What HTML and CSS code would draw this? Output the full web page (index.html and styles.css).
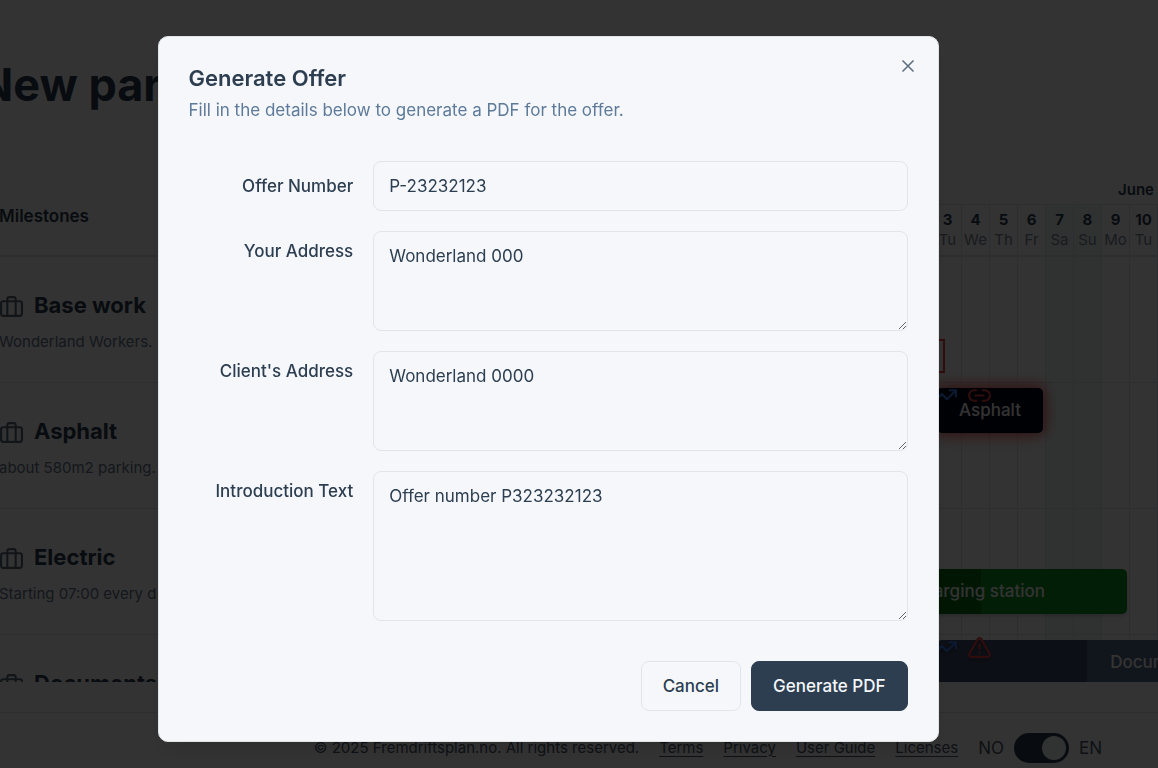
FILE: index.html
```html
<!DOCTYPE html>
<html lang="en">
<head>
    <meta charset="utf-8">
    <meta name="viewport" content="width=device-width, initial-scale=1">
    <title>Generate Offer</title>
    <link rel="stylesheet" href="styles.css">
</head>
<body>

<svg class="sprite" aria-hidden="true">
    <symbol id="briefcase" viewBox="0 0 24 24">
        <path d="M16 20V4a2 2 0 0 0-2-2h-4a2 2 0 0 0-2 2v16"/>
        <rect x="2" y="6" width="20" height="14" rx="2"/>
    </symbol>
    <symbol id="trend" viewBox="0 0 24 24">
        <path d="M22 7l-8.500 8.500-5-5L2 17M16 7h6v6"/>
    </symbol>
    <symbol id="link" viewBox="0 0 24 24">
        <path d="M9 17H7A5 5 0 0 1 7 7h2M15 7h2a5 5 0 1 1 0 10h-2M8 12h8"/>
    </symbol>
    <symbol id="alert" viewBox="0 0 24 24">
        <path d="m21.730 18-8-14a2 2 0 0 0-3.480 0l-8 14A2 2 0 0 0 4 21h16a2 2 0 0 0 1.730-3M12 9v4M12 17h.010"/>
    </symbol>
</svg>

<div class="page">
    <h1>New par</h1>

    <div class="plan">
        <div class="plan-head">
            <div class="milestones-title">Milestones</div>
            <div class="calendar">
                <div class="month">June</div>
                <div class="days">
                    <div class="day"><b>3</b>Tu</div>
                    <div class="day"><b>4</b>We</div>
                    <div class="day"><b>5</b>Th</div>
                    <div class="day"><b>6</b>Fr</div>
                    <div class="day weekend"><b>7</b>Sa</div>
                    <div class="day weekend"><b>8</b>Su</div>
                    <div class="day"><b>9</b>Mo</div>
                    <div class="day"><b>10</b>Tu</div>
                </div>
            </div>
        </div>

        <div class="plan-rows">
            <div class="row">
                <div class="milestone">
                    <h2><svg class="icon"><use href="#briefcase"/></svg>Base work</h2>
                    <p>Wonderland Workers.</p>
                </div>
                <div class="track">
                    <div class="bar bar-outline"></div>
                </div>
            </div>
            <div class="row">
                <div class="milestone">
                    <h2><svg class="icon"><use href="#briefcase"/></svg>Asphalt</h2>
                    <p>about 580m2 parking.</p>
                </div>
                <div class="track">
                    <div class="bar bar-asphalt">Asphalt</div>
                    <div class="marks">
                        <svg class="icon blue"><use href="#trend"/></svg>
                        <svg class="icon red"><use href="#link"/></svg>
                    </div>
                </div>
            </div>
            <div class="row">
                <div class="milestone">
                    <h2><svg class="icon"><use href="#briefcase"/></svg>Electric</h2>
                    <p>Starting 07:00 every d</p>
                </div>
                <div class="track">
                    <div class="bar bar-charging">Charging station</div>
                </div>
            </div>
            <div class="row">
                <div class="milestone">
                    <h2><svg class="icon"><use href="#briefcase"/></svg>Documents</h2>
                </div>
                <div class="track">
                    <div class="bar bar-docs">Documents</div>
                    <div class="marks shadow">
                        <svg class="icon blue"><use href="#trend"/></svg>
                        <svg class="icon red"><use href="#alert"/></svg>
                    </div>
                </div>
            </div>
        </div>
    </div>

    <footer>
        <span>© 2025 Fremdriftsplan.no. All rights reserved.</span>
        <a href="#">Terms</a>
        <a href="#">Privacy</a>
        <a href="#">User Guide</a>
        <a href="#">Licenses</a>
        <div class="language">
            <span>NO</span>
            <input type="checkbox" id="language" class="switch" aria-label="Language" checked>
            <label for="language">EN</label>
        </div>
    </footer>
</div>

<div class="overlay">
    <form class="dialog" role="dialog" aria-labelledby="dialog-title">
        <button type="button" class="close" aria-label="Close">
            <svg viewBox="0 0 24 24"><path d="M18 6 6 18M6 6l12 12"/></svg>
        </button>
        <div class="dialog-head">
            <h2 id="dialog-title">Generate Offer</h2>
            <p>Fill in the details below to generate a PDF for the offer.</p>
        </div>

        <div class="fields">
            <div class="field">
                <label for="offer-number" class="middle">Offer Number</label>
                <input type="text" id="offer-number" value="P-23232123">
            </div>
            <div class="field">
                <label for="your-address">Your Address</label>
                <textarea id="your-address">Wonderland 000</textarea>
            </div>
            <div class="field">
                <label for="client-address">Client's Address</label>
                <textarea id="client-address">Wonderland 0000</textarea>
            </div>
            <div class="field">
                <label for="intro">Introduction Text</label>
                <textarea id="intro" class="tall">Offer number P323232123</textarea>
            </div>
        </div>

        <div class="actions">
            <button type="button" class="btn">Cancel</button>
            <button type="submit" class="btn btn-primary">Generate PDF</button>
        </div>
    </form>
</div>

</body>
</html>
```

FILE: styles.css
```css
* {
    box-sizing: border-box;
}
body {
    margin: 0;
    height: 100vh;
    overflow: hidden;
    font-family: Inter, sans-serif;
    font-size: 15px;
    line-height: 20px;
    color: #2c3e50;
    background-color: #fff;
}
h1, h2, p {
    margin: 0;
}
.sprite {
    display: none;
}
.icon {
    width: 25px;
    height: 25px;
    flex-shrink: 0;
    fill: none;
    stroke: currentColor;
    stroke-width: 2;
    stroke-linecap: round;
    stroke-linejoin: round;
}

/* project plan */
.page {
    margin-left: -1px;
}
h1 {
    margin-left: -20px;
    padding: 60px 0 66px;
    font-size: 45px;
    line-height: 50px;
    font-weight: 700;
}
.plan-head {
    display: flex;
    border-bottom: 2px solid #e1e5e8;
}
.milestones-title {
    flex: 1;
    align-self: center;
    font-size: 17px;
    font-weight: 600;
}
.month {
    padding: 4px 4px 4px 0;
    text-align: right;
    font-weight: 600;
    border-bottom: 1px solid #e1e5e8;
}
.days {
    display: flex;
}
.day {
    width: 28px;
    padding: 5px 0;
    display: flex;
    flex-direction: column;
    align-items: center;
    color: #7b8794;
    border-right: 1px solid #e1e5e8;
}
.day b {
    color: #2c3e50;
}
.weekend {
    background-color: #f0fafa;
}
.plan-rows {
    max-height: 425px;
    overflow: hidden;
}
.row {
    display: flex;
    height: 126px;
    border-bottom: 1px solid #e1e5e8;
}
.milestone {
    flex: 1;
    padding-top: 33px;
}
.milestone h2 {
    display: flex;
    align-items: center;
    gap: 10px;
    font-size: 22px;
    line-height: 30px;
}
.milestone .icon {
    margin-top: 4px;
    color: #5a6a79;
}
.milestone p {
    margin-top: 12px;
    color: #64748b;
}
.track {
    position: relative;
    width: 224px;
    background:
        repeating-linear-gradient(to left, #e1e5e8 0, #e1e5e8 1px, transparent 1px, transparent 28px),
        linear-gradient(to left, transparent 56px, #f0fafa 56px, #f0fafa 112px, transparent 112px);
}
/* the bars span days, so they are placed on the calendar */
.bar {
    position: absolute;
    height: 45px;
    border-radius: 5px;
    font-size: 17px;
    line-height: 45px;
    font-weight: 500;
    text-align: center;
    color: #fff;
}
.bar-outline {
    top: 82px;
    right: 213px;
    width: 60px;
    height: 34px;
    border: 2px solid #ef4444;
    border-radius: 0;
}
.bar-asphalt {
    top: 5px;
    right: 115px;
    width: 106px;
    background-color: #020817;
    box-shadow: 0 0 15px 2px #ef4444;
}
.bar-charging {
    top: 60px;
    right: 31px;
    width: 298px;
    background: linear-gradient(to right, #057012 152px, #0a9420 152px);
    box-shadow: 0 2px 4px rgba(0, 0, 0, 0.2);
}
.bar-docs {
    top: 5px;
    right: -218px;
    width: 439px;
    background: linear-gradient(to right, #3f4d6b 150px, #586a8e 150px);
}
.marks {
    position: absolute;
    top: 0;
    right: 166px;
    display: flex;
    gap: 9px;
}
.shadow {
    filter: drop-shadow(0 2px 2px rgba(0, 0, 0, 0.4));
}
.blue {
    color: #3b82f6;
}
.red {
    color: #ef4444;
}
footer {
    display: flex;
    justify-content: flex-end;
    align-items: center;
    gap: 20px;
    height: 70px;
    margin-top: 30px;
    padding-right: 56px;
    color: #475569;
    border-top: 1px solid #e1e5e8;
}
footer a {
    color: #475569;
    text-underline-offset: 3px;
}
.language {
    display: flex;
    align-items: center;
    gap: 10px;
    font-size: 17px;
}
.switch {
    appearance: none;
    display: flex;
    justify-content: flex-end;
    width: 55px;
    height: 30px;
    margin: 0;
    padding: 3px;
    border-radius: 15px;
    background-color: #2c3e50;
}
.switch::before {
    content: "";
    width: 24px;
    height: 24px;
    border-radius: 50%;
    background-color: #f5f7fb;
}

/* dialog */
.overlay {
    position: fixed;
    inset: 0;
    display: flex;
    justify-content: center;
    align-items: flex-start;
    padding: 36px 62px 0 0;
    background-color: rgba(0, 0, 0, 0.8);
}
.dialog {
    position: relative;
    width: 100%;
    max-width: 781px;
    padding: 30px;
    background-color: #f5f7fb;
    border: 1px solid #e1e5e8;
    border-radius: 10px;
    box-shadow: 0 12px 20px -4px rgba(0, 0, 0, 0.1);
}
.close {
    position: absolute;
    top: 19px;
    right: 20px;
    display: flex;
    padding: 0;
    border: none;
    background: none;
    color: #5f7180;
    cursor: pointer;
}
.close svg {
    width: 20px;
    height: 20px;
    fill: none;
    stroke: currentColor;
    stroke-width: 2;
    stroke-linecap: round;
}
.dialog-head h2 {
    font-size: 22px;
    line-height: 22px;
    font-weight: 600;
}
.dialog-head p {
    margin-top: 9px;
    font-size: 17px;
    line-height: 25px;
    color: #5d7a99;
}
.fields {
    display: grid;
    gap: 20px;
    padding: 38px 0 40px;
}
.field {
    display: grid;
    grid-template-columns: repeat(4, 1fr);
    gap: 20px;
    align-items: start;
}
.field label {
    padding-top: 10px;
    font-size: 17px;
    font-weight: 500;
    text-align: right;
}
.field .middle {
    align-self: center;
    padding: 0;
}
.field input, .field textarea {
    grid-column: span 3;
    display: block;
    width: 100%;
    height: 50px;
    padding: 12px 15px;
    font: inherit;
    font-size: 17px;
    line-height: 25px;
    color: #2c3e50;
    background-color: #f5f7fb;
    border: 1px solid #e1e5e8;
    border-radius: 8px;
}
.field textarea {
    height: 100px;
}
.field .tall {
    height: 150px;
}
.actions {
    display: flex;
    justify-content: flex-end;
    gap: 10px;
}
.btn {
    height: 50px;
    padding: 0 21px;
    font: inherit;
    font-size: 17px;
    font-weight: 500;
    color: #2c3e50;
    background-color: #f5f7fb;
    border: 1px solid #e1e5e8;
    border-radius: 8px;
    cursor: pointer;
}
.btn-primary {
    color: #f5f7fb;
    background-color: #2c3e50;
    border-color: #2c3e50;
}
```
